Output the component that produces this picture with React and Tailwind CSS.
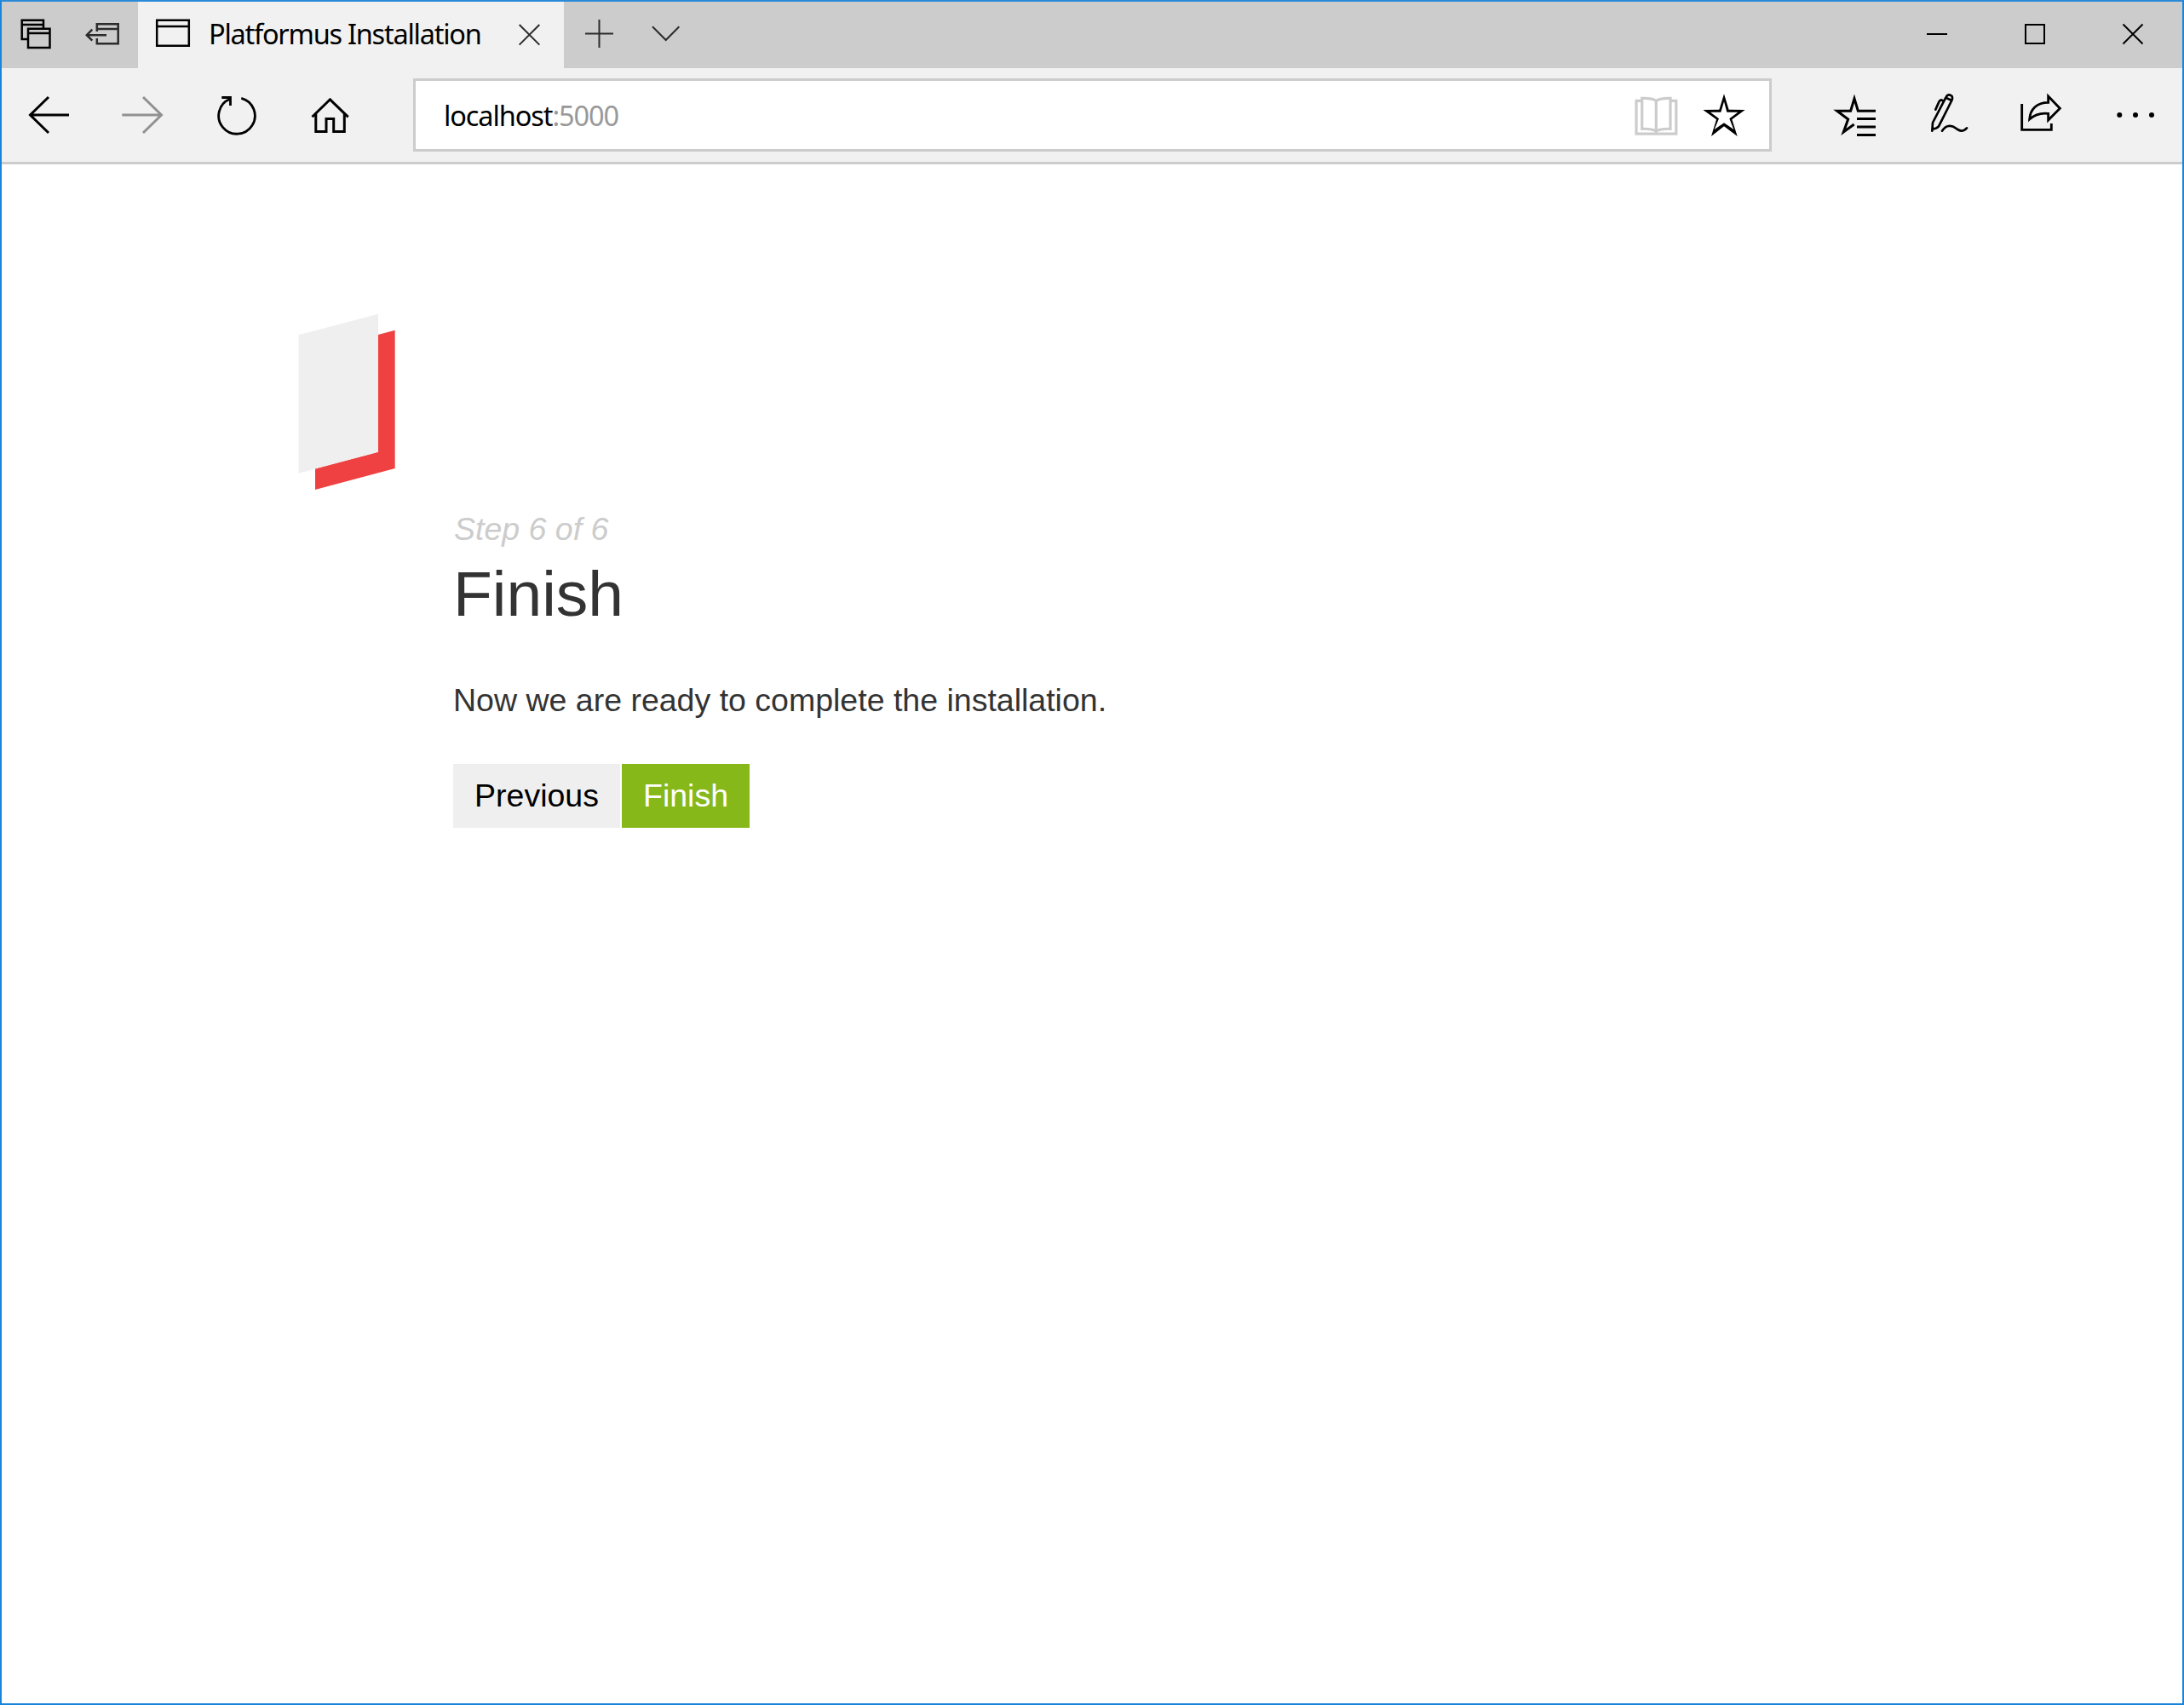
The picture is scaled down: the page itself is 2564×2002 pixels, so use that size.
const THIRD = 'scale(0.33333)';

// Every glyph's viewBox is expressed in window coordinates.
function Glyph({ box, className = '', children, label }) {
  const [, , w, h] = box.split(' ');
  return (
    <button aria-label={label} className={`shrink-0 ${className}`}>
      <svg width={w} height={h} viewBox={box} fill="none" stroke="currentColor" strokeWidth="2" className="block">
        {children}
      </svg>
    </button>
  );
}

function TabStrip() {
  return (
    <div className="flex h-[78px] bg-[#cccccc] text-[#2b2b2b]">
      <Glyph label="Tabs set aside" box="2 2 80 78" className="text-black">
        <path strokeWidth="2.500" d="M32 46H25.700V23.700H51V33M26 29H51M33 33.800H58.500V56H33ZM33 39H58.500" />
      </Glyph>
      <Glyph label="Set tabs aside" box="82 2 80 78">
        <path strokeWidth="2.500" d="M113.800 37V28.300H138.700V51.300H113.800V45M113.800 34H139M125 41.200H102M108.300 34.700L101.800 41.200L108.300 47.700" />
      </Glyph>
      <div className="flex w-[500px] bg-[#f1f1f1]">
        <svg width="83" height="78" viewBox="162 2 83 78" fill="none" stroke="#000" strokeWidth="2.500" className="shrink-0">
          <path d="M184.200 23.700H221.800V53.700H184.200ZM184 31H222" />
        </svg>
        <span className="w-[345px] shrink-0 whitespace-nowrap font-['Noto_Sans','Open_Sans',sans-serif] text-[32.5px] leading-[76px] tracking-[-1.25px] text-black">
          Platformus Installation
        </span>
        <Glyph label="Close tab" box="590 2 72 78">
          <path d="M609.7 29L633.3 52.6M633.3 29L609.7 52.6" />
        </Glyph>
      </div>
      <Glyph label="New tab" box="662 2 82 78">
        <path d="M687 39.4H720M703.5 23V56" />
      </Glyph>
      <Glyph label="Tab previews" box="744 2 76 78">
        <path d="M766 31.3L781.7 47L797.3 31.3" />
      </Glyph>
      <div className="ml-auto flex text-black">
        <Glyph label="Minimize" box="2216 2 115 78">
          <path d="M2262 40H2286" />
        </Glyph>
        <Glyph label="Maximize" box="2331 2 116 78">
          <path d="M2378 29H2400V51H2378Z" />
        </Glyph>
        <Glyph label="Close" box="2447 2 115 78">
          <path d="M2492.5 28.5L2515.5 51.5M2515.5 28.5L2492.5 51.5" />
        </Glyph>
      </div>
    </div>
  );
}

function AddressBar() {
  return (
    <div className="ml-[43px] mr-[44px] mt-[12px] flex h-[86px] flex-1 border-[3px] border-[#cccccc] bg-white">
      <span className="flex-1 whitespace-nowrap pl-[33px] font-['Noto_Sans','Open_Sans',sans-serif] text-[32.5px] leading-[82px] tracking-[-1.1px] text-black">
        localhost<span className="text-[#999999]">:5000</span>
      </span>
      <Glyph label="Reading view" box="1904 95 80 80" className="text-[#cccccc]">
        <path
          strokeWidth="3.200"
          d="M1928 118.3H1921V157.2H1967.8V118.3H1961M1944.3 118.5C1940.5 115.4 1935 115.2 1927.7 115.4V151.3C1935 151.1 1940.5 151.5 1944.3 154.2C1948 151.5 1953.5 151.1 1961 151.3V115.4C1953.5 115.2 1948 115.4 1944.3 118.5V154"
        />
      </Glyph>
      <Glyph label="Add to favorites" box="1984 95 93 80">
        <g transform={`translate(1880 80) ${THIRD}`} stroke="none" fill="#000">
          <path
            fillRule="evenodd"
            d="M432 91L449 146.5L506 147L460 181L479 240L432 205L387 240L405 181L358 147L415 146.5ZM432 118L421 155.5H384L414 178L398 216L432 193L466 216L451 178L481 155.5H442Z"
          />
        </g>
      </Glyph>
    </div>
  );
}

function Toolbar() {
  return (
    <div className="flex h-[113px] border-b-[3px] border-[#cccccc] bg-[#f1f1f1] text-black">
      <Glyph label="Back" box="2 80 110 110">
        <path strokeWidth="3" d="M81 135H35.5M57 114L35.5 135L57 156" />
      </Glyph>
      <Glyph label="Forward" box="112 80 110 110" className="text-[#919191]">
        <path strokeWidth="3" d="M143.3 135H189.5M168 114L189.5 135L168 156" />
      </Glyph>
      <Glyph label="Refresh" box="222 80 110 110">
        <path strokeWidth="2.800" d="M283.3 115.3A21.3 21.3 0 1 1 270 116.200M260.3 114.500H270.500V124" />
      </Glyph>
      <Glyph label="Home" box="332 80 110 110">
        <path strokeWidth="3" d="M366.5 137.3L387.5 116.8L408.7 137.3M370.8 133.5V154.6H383V139.4H391.7V154.6H404.3V133.5" />
      </Glyph>
      <AddressBar />
      <Glyph label="Hub" box="2124 80 110 110">
        <g transform={`translate(2130 90) ${THIRD}`} strokeWidth="9" strokeMiterlimit="10">
          <path d="M216 120.5H154L141 77L128 120.5H80L119 150L103 195L140 168" />
          <path d="M150 148.5H216M150 177H216M150 205.5H216" />
        </g>
      </Glyph>
      <Glyph label="Make a web note" box="2234 80 110 110">
        <g transform={`translate(2130 90) ${THIRD}`} strokeWidth="8" strokeLinecap="round" strokeLinejoin="round">
          <path d="M415 191L417 162L463 74L484 84L438 175C432 182 424 184 416 184M463 74C468 62 477 62 484 68C487 72 486 79 484 84M427 116L439 89C444 79 449 81 455 87" />
          <path d="M450 191C462 172 482 168 497 181C512 194 526 193 537 181" />
        </g>
      </Glyph>
      <Glyph label="Share" box="2344 80 110 110">
        <g transform={`translate(2340 90) ${THIRD}`} strokeWidth="8.500">
          <path d="M101 96V187H205V165" />
          <path d="M194 69V91C154 91 130 115 128 150C146 134 169 127 194 130V153L235 112Z" />
        </g>
      </Glyph>
      <Glyph label="More" box="2454 80 108 110">
        <g fill="#000" stroke="none">
          <circle cx="2488.3" cy="135" r="3" />
          <circle cx="2507" cy="135" r="3" />
          <circle cx="2526" cy="135" r="3" />
        </g>
      </Glyph>
    </div>
  );
}

function Logo() {
  return (
    <svg width="114" height="208" viewBox="60 55 342 624" className="shrink-0">
      <path fill="#ef4141" d="M342 130L401 114V601L120 676V602L342 543Z" />
      <path fill="#efefef" d="M61.5 131L342 57V543L61.5 618Z" />
    </svg>
  );
}

export default function App() {
  return (
    <div className="flex h-[2002px] w-[2564px] flex-col border-2 border-[#1a84da] border-t-[#2b8ad8] bg-white">
      <TabStrip />
      <Toolbar />
      <main className="flex pl-[348px] pt-[175px] font-['Liberation_Sans',Arial,sans-serif] text-[37.5px] leading-[45px] text-[#333333]">
        <Logo />
        <div className="ml-[68px] pt-[231px]">
          <div className="pl-px italic text-[#cccccc]">Step 6 of 6</div>
          <h1 className="mt-[8px] text-[75px] leading-[90px]">Finish</h1>
          <p className="mt-[58px]">Now we are ready to complete the installation.</p>
          <div className="mt-[52px] flex gap-[2px]">
            <button className="h-[75px] w-[196px] bg-[#efefef] text-black">Previous</button>
            <button className="h-[75px] w-[150px] bg-[#87b819] text-white">Finish</button>
          </div>
        </div>
      </main>
    </div>
  );
}
